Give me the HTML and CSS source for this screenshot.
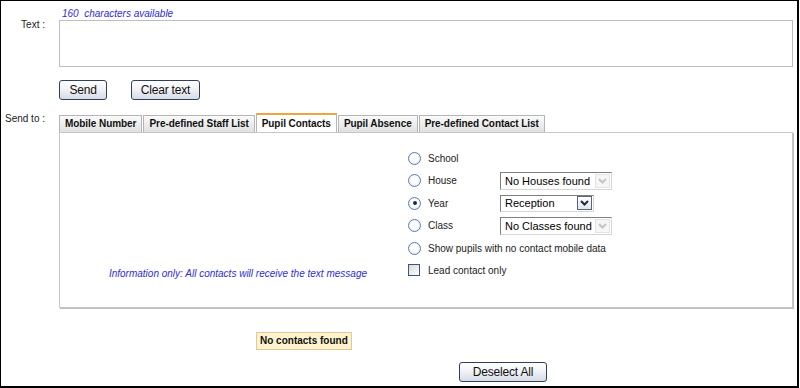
FILE: index.html
```html
<!DOCTYPE html>
<html>
<head>
<meta charset="utf-8">
<link rel="stylesheet" href="styles.css">
</head>
<body>
<div class="page">
  <div class="form">
    <div class="label"></div>
    <div class="chars">160  characters available</div>

    <div class="label lbl-text">Text :</div>
    <div class="textarea"></div>

    <div class="label"></div>
    <div class="buttons">
      <button class="btn btn-send">Send</button>
      <button class="btn btn-clear">Clear text</button>
    </div>

    <div class="label lbl-send">Send to :</div>
    <div class="sendto">
      <div class="tabs">
        <div class="tab">Mobile Number</div>
        <div class="tab">Pre-defined Staff List</div>
        <div class="tab active">Pupil Contacts</div>
        <div class="tab">Pupil Absence</div>
        <div class="tab">Pre-defined Contact List</div>
      </div>
      <div class="panel">
        <div class="panel-left">
          <span class="info">Information only: All contacts will receive the text message</span>
        </div>
        <div class="options">
          <div class="opt">
            <span class="radio"></span><span class="opt-label">School</span>
          </div>
          <div class="opt tall">
            <span class="radio"></span><span class="opt-label">House</span>
            <div class="select sel-wide">
              <span>No Houses found</span>
              <span class="arrow"><svg width="11" height="8" viewBox="0 0 11 8"><path d="M2 2 L5.5 5.5 L9 2" fill="none" stroke="#c4c4c4" stroke-width="2"/></svg></span>
            </div>
          </div>
          <div class="opt">
            <span class="radio checked"></span><span class="opt-label">Year</span>
            <div class="select sel-year enabled">
              <span>Reception</span>
              <span class="arrow"><svg width="11" height="8" viewBox="0 0 11 8"><path d="M2 2 L5.5 5.5 L9 2" fill="none" stroke="#1c2a44" stroke-width="2"/></svg></span>
            </div>
          </div>
          <div class="opt tall">
            <span class="radio"></span><span class="opt-label">Class</span>
            <div class="select sel-wide">
              <span>No Classes found</span>
              <span class="arrow"><svg width="11" height="8" viewBox="0 0 11 8"><path d="M2 2 L5.5 5.5 L9 2" fill="none" stroke="#c4c4c4" stroke-width="2"/></svg></span>
            </div>
          </div>
          <div class="opt">
            <span class="radio"></span><span>Show pupils with no contact mobile data</span>
          </div>
          <div class="opt">
            <span class="check"></span><span>Lead contact only</span>
          </div>
        </div>
      </div>
      <div class="result"><span class="nocontacts">No contacts found</span></div>
      <div class="actions"><button class="btn btn-deselect">Deselect All</button></div>
    </div>
  </div>
</div>
</body>
</html>
```

FILE: styles.css
```css
body {
  margin: 0;
  font-family: "Liberation Sans", Arial, sans-serif;
  color: #222;
  background: #fff;
}

.page {
  width: 799px;
  height: 388px;
  box-sizing: border-box;
  border: solid #000;
  border-width: 1px 2px 2px 1px;
  padding-top: 7px;
}

.form {
  display: grid;
  grid-template-columns: 44px 734px;
  column-gap: 14px;
  align-items: start;
}

.label {
  text-align: right;
  font-size: 10px;
  line-height: 12px;
  color: #222;
}

.lbl-text {
  margin-top: -1px;
}

.lbl-send {
  margin-top: 13px;
}

.chars {
  font-size: 10px;
  font-style: italic;
  color: #2e2ed8;
  line-height: 12px;
  padding-left: 3px;
  white-space: pre;
}

.textarea {
  height: 47px;
  box-sizing: border-box;
  border: 1px solid #bdbdbd;
  background: #fff;
}

.buttons {
  display: flex;
  gap: 24px;
  margin-top: 13px;
}

.btn {
  height: 20px;
  box-sizing: border-box;
  border: 1px solid #2f3f60;
  border-radius: 3px;
  background: linear-gradient(#ffffff, #f1f3f7 45%, #d6dbe5);
  font-family: "Liberation Sans", Arial, sans-serif;
  font-size: 12px;
  color: #111;
  padding: 0;
  margin: 0;
  display: flex;
  align-items: center;
  justify-content: center;
  letter-spacing: -0.2px;
}

.btn-send { width: 48px; }
.btn-clear { width: 69px; }
.btn-deselect { width: 88px; }

.tabs {
  display: flex;
  align-items: flex-end;
  margin-top: 13px;
  height: 19px;
}

.tab {
  height: 17px;
  box-sizing: border-box;
  border: 1px solid #b5b5b5;
  border-bottom: none;
  background: linear-gradient(#fbfbfb, #e0e0e0);
  font-weight: bold;
  font-size: 10px;
  line-height: 16px;
  padding: 0 5px;
  margin-right: 1px;
  color: #111;
  white-space: nowrap;
  letter-spacing: -0.06px;
}

.tab.active {
  height: 19px;
  background: #fff;
  border-top: 2px solid #f0a53c;
  line-height: 17px;
}

.panel {
  display: flex;
  height: 176px;
  box-sizing: border-box;
  border: 1px solid #c6c6c6;
  box-shadow: 1px 1px 0 #bdbdbd;
}

.panel-left {
  width: 348px;
  box-sizing: border-box;
  display: flex;
  flex-direction: column;
  justify-content: flex-end;
  align-items: flex-end;
  padding: 0 41px 27px 0;
}

.info {
  font-size: 10px;
  font-style: italic;
  color: #2e2ed8;
  line-height: 12px;
  white-space: nowrap;
}

.options {
  padding-top: 14px;
}

.opt {
  display: flex;
  align-items: center;
  height: 22px;
  font-size: 10px;
  color: #222;
  white-space: nowrap;
}

.opt.tall {
  height: 23px;
}

.radio {
  width: 13px;
  height: 13px;
  box-sizing: border-box;
  border-radius: 50%;
  border: 1px solid #5a7cb0;
  background: radial-gradient(circle at 50% 45%, #ffffff 35%, #dce3ee);
  margin-right: 7px;
  display: flex;
  align-items: center;
  justify-content: center;
  flex: none;
}

.radio.checked::after {
  content: "";
  width: 4px;
  height: 4px;
  border-radius: 50%;
  background: #1d2b45;
}

.check {
  width: 12px;
  height: 12px;
  box-sizing: border-box;
  border: 1px solid #3a5480;
  background: linear-gradient(135deg, #d8d8d8, #ffffff);
  margin-right: 8px;
  flex: none;
}

.opt-label {
  width: 72px;
}

.select {
  display: flex;
  align-items: center;
  justify-content: space-between;
  height: 18px;
  box-sizing: border-box;
  border: 1px solid;
  border-color: #7f7f7f #d6d6d6 #d6d6d6 #7f7f7f;
  font-size: 11px;
  color: #000;
  padding-left: 4px;
  background: #fff;
}

.sel-wide { width: 112px; }
.sel-year { width: 94px; height: 17px; }

.select .arrow {
  width: 15px;
  height: 14px;
  box-sizing: border-box;
  margin-right: 1px;
  border: 1px solid #e4e4e4;
  background: #f6f6f6;
  display: flex;
  align-items: center;
  justify-content: center;
}

.select.enabled .arrow {
  height: 14px;
  border-color: #5c6475;
  background: linear-gradient(#ffffff, #dfe5ee);
}

.result {
  display: flex;
  margin-top: 24px;
  padding-left: 197px;
}

.nocontacts {
  height: 18px;
  box-sizing: border-box;
  border: 1px solid #e2c98f;
  background: #fff3cf;
  font-weight: bold;
  font-size: 10px;
  line-height: 16px;
  padding: 0 3px;
  color: #111;
}

.actions {
  display: flex;
  margin-top: 12px;
  padding-left: 400px;
}
```
